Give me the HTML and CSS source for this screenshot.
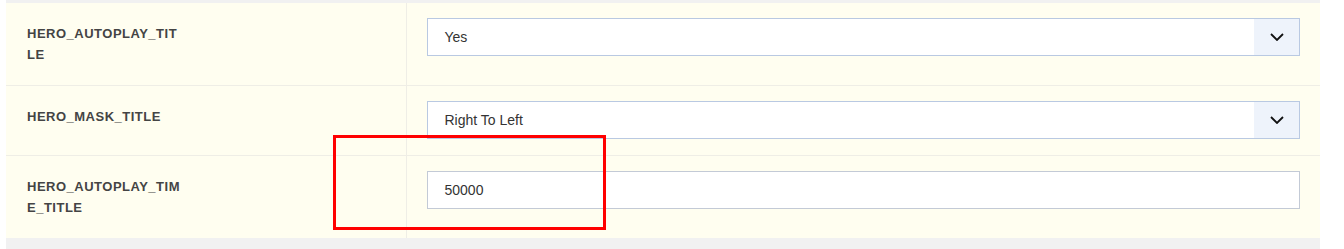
FILE: index.html
```html
<!DOCTYPE html>
<html>
<head>
    <link rel="stylesheet" href="styles.css">
</head>
<body>
    <div class="settings">
        <table class="settings-table">
            <tr>
                <td class="label-cell"><div class="label">HERO_AUTOPLAY_TITLE</div></td>
                <td class="value-cell">
                    <div class="select">
                        <span class="select-text">Yes</span>
                        <span class="select-arrow">
                            <svg width="14" height="8" viewBox="0 0 14 8"><path d="M1 1 L7 7 L13 1" fill="none" stroke="#111" stroke-width="1.8"/></svg>
                        </span>
                    </div>
                </td>
            </tr>
            <tr>
                <td class="label-cell"><div class="label">HERO_MASK_TITLE</div></td>
                <td class="value-cell">
                    <div class="select">
                        <span class="select-text">Right To Left</span>
                        <span class="select-arrow">
                            <svg width="14" height="8" viewBox="0 0 14 8"><path d="M1 1 L7 7 L13 1" fill="none" stroke="#111" stroke-width="1.8"/></svg>
                        </span>
                    </div>
                </td>
            </tr>
            <tr>
                <td class="label-cell"><div class="label">HERO_AUTOPLAY_TIME_TITLE</div></td>
                <td class="value-cell">
                    <div class="text-input">50000</div>
                </td>
            </tr>
        </table>
    </div>
    <div class="highlight"></div>
</body>
</html>
```

FILE: styles.css
```css
body {
    margin: 0;
    background: #ffffff;
    font-family: "Liberation Sans", Arial, sans-serif;
}

.settings {
    margin-left: 6px;
    width: 1314px;
    background: #f1f1f1;
    padding: 3px 0 12px;
}

.settings-table {
    width: 100%;
    border-collapse: collapse;
    background: #fffef0;
}

.settings-table td {
    vertical-align: top;
    padding: 0;
}

.settings-table tr + tr td {
    border-top: 1px solid #efeee6;
}

.label-cell {
    width: 400px;
    border-right: 1px solid #efeee6;
    padding: 20px 21px !important;
    box-sizing: border-box;
}

.label {
    width: 157px;
    font-size: 13px;
    line-height: 21px;
    font-weight: bold;
    letter-spacing: 0.5px;
    color: #444;
    word-break: break-all;
}

.value-cell {
    padding: 15px 20px 16px !important;
}

.select,
.text-input {
    display: flex;
    align-items: center;
    height: 38px;
    box-sizing: border-box;
    border: 1px solid #b9c9e2;
    background: #fff;
    font-size: 14px;
    color: #333;
}

.text-input {
    border-color: #c3cad6;
    padding-left: 17px;
}

.select-text {
    flex: 1;
    padding-left: 17px;
}

.select-arrow {
    width: 45px;
    height: 100%;
    background: #eef3fb;
    display: flex;
    align-items: center;
    justify-content: center;
}

.highlight {
    position: absolute;
    left: 333px;
    top: 135px;
    width: 267px;
    height: 89px;
    border: 3px solid #ff0000;
}
```
